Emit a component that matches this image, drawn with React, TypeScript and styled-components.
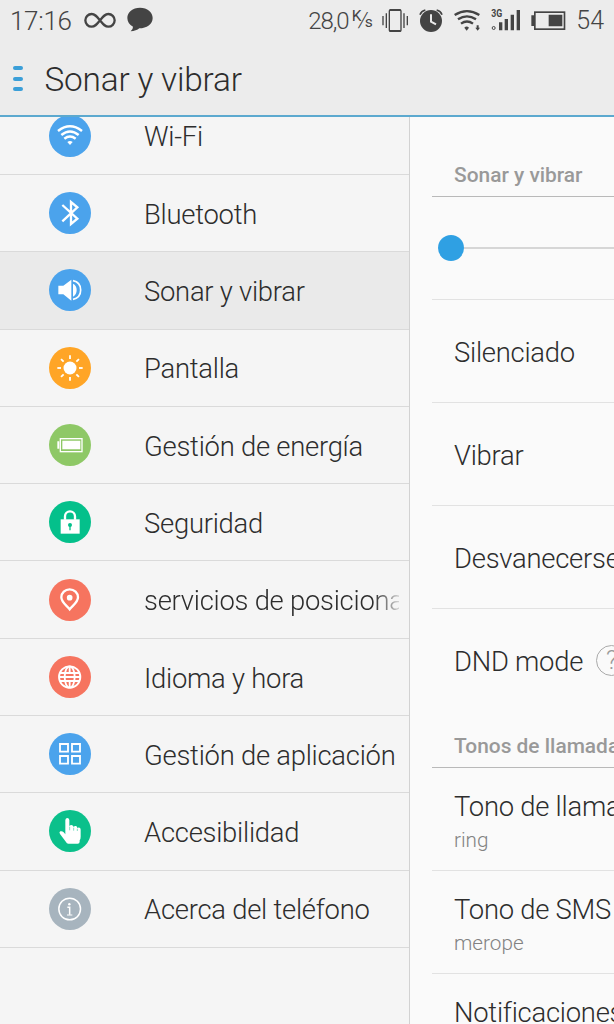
import React from 'react';
import styled, { createGlobalStyle } from 'styled-components';

const GlobalStyle = createGlobalStyle`
  * { box-sizing: border-box; }
  body { margin: 0; overflow: hidden; }
`;

const Screen = styled.div`
  width: 614px;
  height: 1024px;
  overflow: hidden;
  display: flex;
  flex-direction: column;
  background: #f5f5f5;
  color: #2d2d2d;
  font-family: Roboto, 'Liberation Sans', sans-serif;
  font-weight: 300;
  white-space: nowrap;
`;

const Header = styled.header`
  height: 117px;
  flex: none;
  background: #ececec;
  border-bottom: 2px solid #5ca9cf;
`;

const StatusBar = styled.div`
  height: 40px;
  padding: 0 10px 0 10px;
  display: flex;
  align-items: center;
  justify-content: space-between;
  color: #444;
`;

const StatusGroup = styled.div`
  display: flex;
  align-items: center;
`;

const StatusText = styled.span<{ $size: number; $spacing?: number; $gap?: number }>`
  margin-left: ${(p) => p.$gap ?? 0}px;
  font-size: ${(p) => p.$size}px;
  letter-spacing: ${(p) => p.$spacing ?? 0}px;
  line-height: 40px;
  padding-top: 2px;
`;

const RateUnit = styled.span`
  display: flex;
  margin-left: 3.5px;
  font-size: 15.5px;
  font-weight: 400;
  line-height: 20px;
  letter-spacing: -2.6px;
`;

const Raised = styled.span<{ $shift: number }>`
  transform: translateY(${(p) => p.$shift}px);
`;

const Slash = styled.span`
  font-size: 21px;
  font-weight: 300;
  transform: skewX(-10deg);
`;

const StatusSvg = styled.svg<{ $w: number; $gap: number }>`
  width: ${(p) => p.$w}px;
  height: 26.67px;
  margin-left: ${(p) => p.$gap}px;
  flex: none;
`;

const TitleBar = styled.div`
  height: 75px;
  padding-left: 13px;
  display: flex;
  align-items: center;
`;

const MenuButton = styled.div`
  width: 10px;
  display: flex;
  flex-direction: column;
  gap: 6.5px;
  margin-right: 21.5px;
  padding-top: 2px;
`;

const MenuDash = styled.span`
  height: 4px;
  border-radius: 2px;
  background: #3b9fd8;
`;

const Title = styled.h1`
  margin: 0;
  padding-top: 4px;
  font-size: 33.4px;
  font-weight: 300;
  line-height: 40px;
  letter-spacing: -0.2px;
`;

const Body = styled.main`
  flex: 1;
  min-height: 0;
  display: flex;
`;

const Sidebar = styled.nav`
  width: 410px;
  flex: none;
  overflow: hidden;
  border-right: 1px solid #d2d2d2;
`;

const SideList = styled.div`
  margin-top: -19.4px;
`;

const SideRow = styled.div<{ $active?: boolean }>`
  height: 77.3px;
  padding-left: 49px;
  display: flex;
  align-items: center;
  border-bottom: 1px solid #dadada;
  background: ${(p) => (p.$active ? '#eaeaea' : '#f5f5f5')};
`;

const Disc = styled.span<{ $color: string }>`
  width: 42px;
  height: 42px;
  flex: none;
  border-radius: 50%;
  background: ${(p) => p.$color};
  margin-right: 53px;
  svg { display: block; width: 42px; height: 42px; }
`;

const SideLabel = styled.span<{ $fade?: boolean }>`
  width: 255px;
  overflow: hidden;
  padding-top: 3.4px;
  font-size: 27.4px;
  line-height: 40px;
  letter-spacing: -0.24px;
  mask-image: ${(p) => (p.$fade ? 'linear-gradient(to right, #000 230px, transparent 260px)' : 'none')};
`;

const Detail = styled.section`
  flex: 1;
  min-width: 0;
  overflow: hidden;
  padding-left: 22px;
  background: #fafafa;
`;

const SectionHead = styled.h2<{ $height: number }>`
  margin: 0;
  height: ${(p) => p.$height}px;
  padding: 0 0 7px 22px;
  display: flex;
  align-items: flex-end;
  border-bottom: 1px solid #b9b9b9;
  color: #999;
  font-size: 20.9px;
  font-weight: 500;
  line-height: 28px;
`;

const DetailRow = styled.div<{ $last?: boolean }>`
  height: 103px;
  padding-left: 22px;
  display: flex;
  flex-direction: column;
  justify-content: center;
  border-bottom: 1px solid ${(p) => (p.$last ? 'transparent' : '#e2e2e2')};
`;

const DetailLabel = styled.span<{ $stacked?: boolean }>`
  display: flex;
  align-items: center;
  font-size: 27.4px;
  line-height: 40px;
  letter-spacing: -0.24px;
  padding-top: ${(p) => (p.$stacked ? 0 : 4)}px;
`;

const DetailValue = styled.span`
  color: #828282;
  font-size: 20.7px;
  line-height: 24px;
  padding-top: 1px;
`;

const Help = styled.span`
  width: 31px;
  height: 31px;
  flex: none;
  margin: -3px 0 0 13px;
  border: 1px solid #aaa;
  border-radius: 50%;
  color: #999;
  font-size: 25px;
  line-height: 30px;
  text-align: center;
`;

const SliderRow = styled.div`
  height: 103px;
  padding-left: 6px;
  display: flex;
  align-items: center;
  border-bottom: 1px solid #e2e2e2;
`;

const Thumb = styled.span`
  width: 26px;
  height: 26px;
  flex: none;
  border-radius: 50%;
  background: #2fa0e3;
`;

const Track = styled.span`
  flex: 1;
  height: 2px;
  background: #d6d6d6;
`;

const ink = '#444';
const blue = '#4ba3ec';

const Line = ({ w, children }: { w: number; children: React.ReactNode }) => (
  <svg viewBox="-63 -63 126 126" fill="none" stroke="#fff" strokeWidth={w}>
    {children}
  </svg>
);

const rays = [0, 45, 90, 135, 180, 225, 270, 315];

const items: { label: string; color: string; active?: boolean; fade?: boolean; icon: React.ReactNode }[] = [
  {
    label: 'Wi-Fi',
    color: blue,
    icon: (
      <Line w={7.5}>
        <path d="M-36 -15Q0 -43 36 -15M-26 -3Q0 -24 26 -3M-17 8Q0 -5 17 8" />
        <path d="M-8 18Q0 12 8 18L0 27Z" fill="#fff" stroke="none" />
      </Line>
    ),
  },
  {
    label: 'Bluetooth',
    color: blue,
    icon: <Line w={7}><path d="M-23 -24L22 17L3 33V-33L22 -17L-23 25" /></Line>,
  },
  {
    label: 'Sonar y vibrar',
    color: blue,
    active: true,
    icon: (
      <Line w={5}>
        <path d="M-35 -13H-20L4 -31V32L-20 13H-35Z M9 -19Q20 -14 20 0Q20 14 9 20Z" fill="#fff" stroke="none" />
        <path d="M9 -28C23 -25 32 -14 32 0C32 14 23 25 9 28" />
      </Line>
    ),
  },
  {
    label: 'Pantalla',
    color: '#ffa526',
    icon: (
      <Line w={5.5}>
        <circle r="19.5" fill="#fff" stroke="none" />
        {rays.map((a) => <path key={a} d="M0 -27V-38" transform={`rotate(${a})`} />)}
      </Line>
    ),
  },
  {
    label: 'Gestión de energía',
    color: '#8ec866',
    icon: (
      <Line w={4}>
        <rect x="-29" y="-19" width="65" height="39" />
        <path d="M-23 -13H31V13H-23ZM-38 -11H-32V11H-38Z" fill="#fff" stroke="none" />
      </Line>
    ),
  },
  {
    label: 'Seguridad',
    color: '#04c08b',
    icon: (
      <Line w={7}>
        <path d="M-15 -7V-17A15 15 0 0 1 15 -17V-7" />
        <rect x="-28" y="-8" width="57" height="43" fill="#fff" stroke="none" />
        <circle cy="9" r="6" fill="#04c08b" stroke="none" />
        <path d="M0 10V25" stroke="#04c08b" strokeWidth="4" />
      </Line>
    ),
  },
  {
    label: 'servicios de posicionamiento',
    color: '#f6745f',
    fade: true,
    icon: (
      <Line w={7}>
        <path d="M-1 28C-8 18 -26 8 -26 -8A25 24 0 0 1 24 -8C24 8 6 18 -1 28Z" />
        <circle cx="-1" cy="-7" r="8.5" fill="#fff" stroke="none" />
      </Line>
    ),
  },
  {
    label: 'Idioma y hora',
    color: '#f6745f',
    icon: (
      <Line w={5.5}>
        <circle cx="-1" r="32" />
        <ellipse cx="-1" rx="15" ry="32" />
        <path d="M-1 -32V-12M-1 12V32M-30 -12H28M-33 0H31M-30 12H28" />
      </Line>
    ),
  },
  {
    label: 'Gestión de aplicación',
    color: blue,
    icon: <Line w={5.5}><path d="M-30 -30H-6V-7H-30ZM6 -30H30V-7H6ZM-30 6H-6V29H-30ZM6 6H30V29H6Z" /></Line>,
  },
  {
    label: 'Accesibilidad',
    color: '#0bc08b',
    icon: (
      <Line w={0}>
        <path
          fill="#fff"
          stroke="none"
          d="M-14 -33Q-13 -39 -8 -39Q-3 -39 -2 -33V-15Q0 -18 5 -18Q10 -17 11 -12Q13 -16 18 -15Q22 -14 22 -9Q25 -12 29 -10Q32 -9 32 -4V17Q32 24 29 28V32Q29 38 23 38H-5Q-10 38 -12 33L-30 9Q-34 3 -29 1Q-24 -1 -19 4L-14 10Z"
        />
        <path d="M-1 -13V-2M11 -10V-1M22 -7V0" stroke="#0bc08b" strokeWidth="1.5" />
      </Line>
    ),
  },
  {
    label: 'Acerca del teléfono',
    color: '#a7b4be',
    icon: (
      <Line w={4.5}>
        <circle cx="-1" r="32.5" />
        <circle cx="-2" cy="-14" r="3.7" fill="#fff" stroke="none" />
        <path d="M-8 -5H-1V17" strokeWidth="4.5" />
        <path d="M-9 18H7" strokeWidth="3" />
      </Line>
    ),
  },
];

export default function App() {
  return (
    <Screen>
      <GlobalStyle />
      <Header>
        <StatusBar>
          <StatusGroup>
            <StatusText $size={26} $spacing={-0.3}>17:16</StatusText>
            <StatusSvg $w={32} $gap={12.5} viewBox="252 20 96 80" fill="none" stroke={ink} strokeWidth="7">
              <path d="M300 60C290 48 285 41 275 41A19 19 0 0 0 275 79C285 79 290 72 300 60C310 48 315 41 325 41A19 19 0 0 1 325 79C315 79 310 72 300 60Z" />
            </StatusSvg>
            <StatusSvg $w={26} $gap={10.5} viewBox="379 20 78 80" fill={ink}>
              <path d="M418 22C440 22 456 36 456 53C456 72 438 84 416 84C410 89 401 93 390 93Q397 88 397 79C386 73 380 64 380 53C380 36 396 22 418 22Z" />
            </StatusSvg>
          </StatusGroup>
          <StatusGroup>
            <StatusText $size={24} $spacing={-1.1}>28,0</StatusText>
            <RateUnit>
              <Raised $shift={-4}>K</Raised>
              <Slash>/</Slash>
              <Raised $shift={2}>s</Raised>
            </RateUnit>
            <StatusSvg $w={26.67} $gap={11.5} viewBox="243 20 80 80" fill="none" stroke={ink} strokeWidth="4">
              <rect x="265" y="29" width="35" height="64" rx="3" />
              <path d="M266 29H299M266 92H299" strokeWidth="6" />
              <path d="M246 47V75M256 39V83M309 39V83M319 47V75" />
            </StatusSvg>
            <StatusSvg $w={24} $gap={11} viewBox="355 20 72 80" fill={ink}>
              <circle cx="391" cy="62" r="33" />
              <path d="M391 42V64L406 72" fill="none" stroke="#ebebeb" strokeWidth="6" />
              <path d="M358 43Q362 32 374 29M424 43Q420 32 408 29" fill="none" stroke={ink} strokeWidth="5" />
            </StatusSvg>
            <StatusSvg $w={26.67} $gap={10.5} viewBox="460 20 80 80" fill="none" stroke={ink} strokeWidth="7">
              <path d="M462 44Q499 21 536 44M472 57Q499 39 526 57M481 70Q499 57 517 70" />
              <path d="M491 82Q498 75 505 82L498 91Z" fill={ink} stroke="none" />
              <path d="M524 82H538L531 91ZM528 75H534V83H528Z" fill={ink} stroke="none" />
            </StatusSvg>
            <StatusSvg $w={30} $gap={10.5} viewBox="573 20 90 80" fill={ink}>
              <text x="574" y="50" fontSize="31" fontWeight="700" textLength="33" lengthAdjust="spacingAndGlyphs">3G</text>
              <circle cx="581" cy="83" r="4.5" fill="none" stroke={ink} strokeWidth="3" />
              <path d="M597 66H607V90H597ZM614 56H624V90H614ZM632 43H642V90H632ZM650 29H660V90H650Z" />
            </StatusSvg>
            <StatusSvg $w={35} $gap={10} viewBox="693 20 105 80" fill={ink}>
              <path d="M694 45H703V77H694ZM746 43H787V78H746Z" />
              <rect x="704.5" y="35.5" width="89" height="51" fill="none" stroke={ink} strokeWidth="5" />
            </StatusSvg>
            <StatusText $size={25} $gap={10.3}>54</StatusText>
          </StatusGroup>
        </StatusBar>
        <TitleBar>
          <MenuButton><MenuDash /><MenuDash /><MenuDash /></MenuButton>
          <Title>Sonar y vibrar</Title>
        </TitleBar>
      </Header>
      <Body>
        <Sidebar>
          <SideList>
            {items.map((it) => (
              <SideRow key={it.label} $active={it.active}>
                <Disc $color={it.color}>{it.icon}</Disc>
                <SideLabel $fade={it.fade}>{it.label}</SideLabel>
              </SideRow>
            ))}
          </SideList>
        </Sidebar>
        <Detail>
          <SectionHead $height={80}>Sonar y vibrar</SectionHead>
          <SliderRow><Thumb /><Track /></SliderRow>
          <DetailRow><DetailLabel>Silenciado</DetailLabel></DetailRow>
          <DetailRow><DetailLabel>Vibrar</DetailLabel></DetailRow>
          <DetailRow><DetailLabel>Desvanecerse</DetailLabel></DetailRow>
          <DetailRow $last><DetailLabel>DND mode<Help>?</Help></DetailLabel></DetailRow>
          <SectionHead $height={56}>Tonos de llamada</SectionHead>
          <DetailRow><DetailLabel $stacked>Tono de llamada</DetailLabel><DetailValue>ring</DetailValue></DetailRow>
          <DetailRow><DetailLabel $stacked>Tono de SMS</DetailLabel><DetailValue>merope</DetailValue></DetailRow>
          <DetailRow><DetailLabel $stacked>Notificaciones</DetailLabel><DetailValue>merope</DetailValue></DetailRow>
        </Detail>
      </Body>
    </Screen>
  );
}
